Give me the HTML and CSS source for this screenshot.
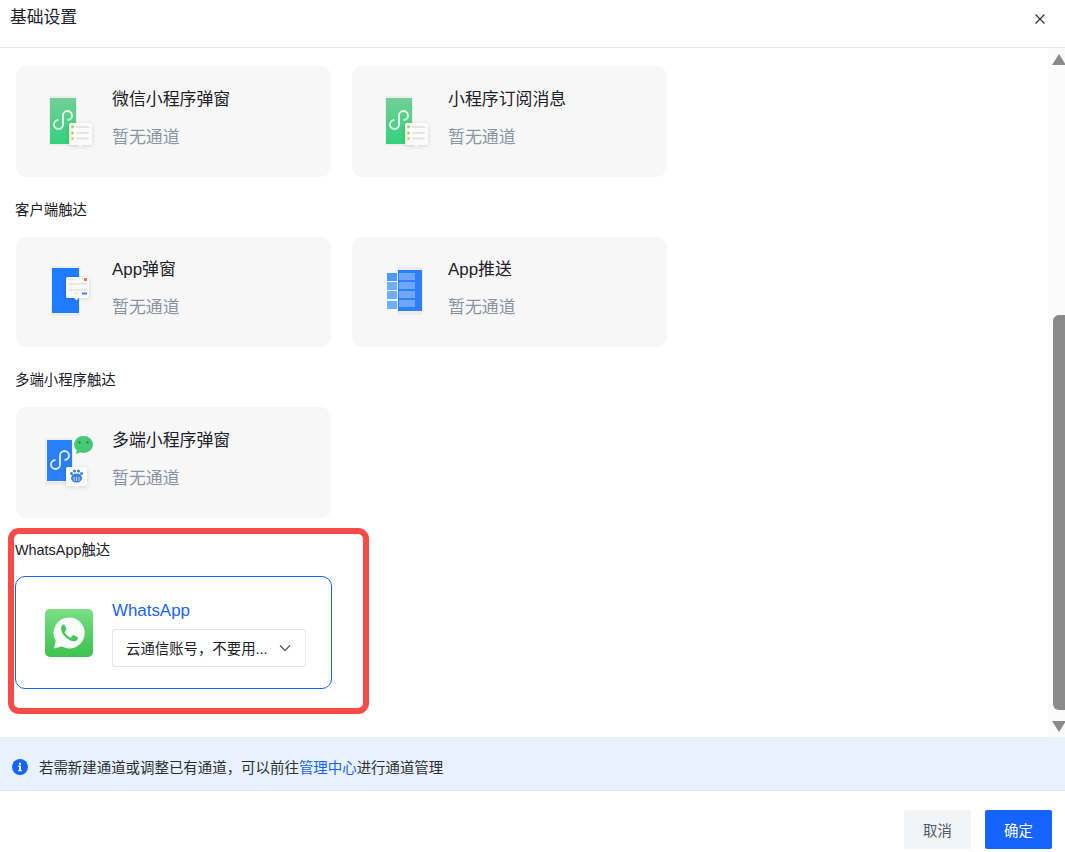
FILE: index.html
```html
<!DOCTYPE html>
<html lang="zh-CN">
<head>
<meta charset="utf-8">
<title>基础设置</title>
<link rel="stylesheet" href="styles.css">
</head>
<body>
<div class="dialog">
  <header class="head">
    <h1 class="head-title">基础设置</h1>
    <svg class="close" width="12" height="12" viewBox="0 0 12 12"><path d="M1.5 1.5l9 9M10.5 1.5l-9 9" stroke="#2b3040" stroke-width="1.2" fill="none"/></svg>
  </header>
  <main class="body">
    <div class="content">
      <div class="row">
        <div class="card">
          <svg class="icon" width="54" height="55" viewBox="-4 0 54 55"><defs><linearGradient id="g1" x1="0" y1="0" x2="0" y2="1"><stop offset="0" stop-color="#72ce96"/><stop offset="1" stop-color="#33d37b"/></linearGradient></defs><rect x="0" y="2" width="28" height="50" rx="1" fill="#ededed"/><rect x="1" y="4" width="26" height="46" fill="url(#g1)"/><path d="M18.500 26a4.500 4.500 0 1 0-4.500-4.500v9a4.500 4.500 0 1 1-4.500-4.500" fill="none" stroke="#fff" stroke-opacity=".88" stroke-width="1.800"/><rect class="pop" x="20" y="29" width="23" height="22" rx="2" fill="#fbfbfb"/><path d="M29 51h5l-2.500 2.500z" fill="#f4f4f4"/><circle cx="23.500" cy="33" r="1.400" fill="#9ad84a"/><circle cx="23.500" cy="39" r="1.400" fill="#9ad84a"/><circle cx="23.500" cy="44.500" r="1.400" fill="#f7c63e"/><path d="M27 33h13M27 39h13M27 44.500h13" stroke="#e6e6e6" stroke-width="2"/></svg>
          <div class="info"><div class="name">微信小程序弹窗</div><div class="status">暂无通道</div></div>
        </div>
        <div class="card">
          <svg class="icon" width="54" height="55" viewBox="-4 0 54 55"><defs><linearGradient id="g2" x1="0" y1="0" x2="0" y2="1"><stop offset="0" stop-color="#72ce96"/><stop offset="1" stop-color="#33d37b"/></linearGradient></defs><rect x="0" y="2" width="28" height="50" rx="1" fill="#ededed"/><rect x="1" y="4" width="26" height="46" fill="url(#g2)"/><path d="M18.500 26a4.500 4.500 0 1 0-4.500-4.500v9a4.500 4.500 0 1 1-4.500-4.500" fill="none" stroke="#fff" stroke-opacity=".88" stroke-width="1.800"/><rect class="pop" x="20" y="29" width="23" height="22" rx="2" fill="#fbfbfb"/><path d="M29 51h5l-2.500 2.500z" fill="#f4f4f4"/><circle cx="23.500" cy="33" r="1.400" fill="#9ad84a"/><circle cx="23.500" cy="39" r="1.400" fill="#9ad84a"/><circle cx="23.500" cy="44.500" r="1.400" fill="#f7c63e"/><path d="M27 33h13M27 39h13M27 44.500h13" stroke="#e6e6e6" stroke-width="2"/></svg>
          <div class="info"><div class="name">小程序订阅消息</div><div class="status">暂无通道</div></div>
        </div>
      </div>
      <div class="label">客户端触达</div>
      <div class="row short">
        <div class="card">
          <svg class="icon" width="54" height="55" viewBox="-4 0 54 55"><rect x="2" y="1" width="29" height="50" rx="1" fill="#ededed"/><rect x="3" y="3" width="27" height="45" fill="#1f7bff"/><rect class="pop" x="17" y="12" width="23" height="21" rx="1.500" fill="#fbfbfb"/><path d="M25 33h5l-2.500 2.500z" fill="#f5f5f5"/><rect x="35" y="13" width="3" height="3" fill="#f0763c"/><path d="M19.500 14.500h7M19.500 19h18M19.500 25h18" stroke="#e4e4e4" stroke-width="1.600"/><rect x="33" y="27.500" width="5" height="2" fill="#3b86f0"/><rect x="25" y="27.500" width="5" height="2" fill="#e8e8e8"/></svg>
          <div class="info"><div class="name">App弹窗</div><div class="status">暂无通道</div></div>
        </div>
        <div class="card">
          <svg class="icon" width="54" height="55" viewBox="-4 0 54 55"><rect x="12" y="2" width="26" height="48" rx="1" fill="#ededed"/><rect x="13" y="5" width="24" height="41" fill="#2a80fd"/><rect x="2" y="8" width="10" height="8" fill="#4f97fb"/><rect x="2" y="17" width="10" height="8" fill="#6cb0fb"/><rect x="2" y="26" width="10" height="8" fill="#6cb0fb"/><rect x="2" y="36" width="10" height="8" fill="#6cb0fb"/><rect x="14" y="8" width="16" height="7" fill="#6ea7f5"/><rect x="14" y="17" width="16" height="7" fill="#6ea7f5"/><rect x="14" y="26" width="16" height="7" fill="#6ea7f5"/><rect x="14" y="35" width="16" height="7" fill="#6ea7f5"/></svg>
          <div class="info"><div class="name">App推送</div><div class="status">暂无通道</div></div>
        </div>
      </div>
      <div class="label">多端小程序触达</div>
      <div class="row">
        <div class="card">
          <svg class="icon" width="54" height="55" viewBox="-4 0 54 55"><rect x="-4" y="3" width="28" height="47" rx="1" fill="#ededed"/><rect x="-2" y="5" width="25" height="41" fill="#2a7ffb"/><path d="M15.500 25a4.500 4.500 0 1 0-4.500-4.500v9a4.500 4.500 0 1 1-4.500-4.500" fill="none" stroke="#fff" stroke-opacity=".88" stroke-width="1.800"/><ellipse cx="34.500" cy="9.500" rx="9.500" ry="8.500" fill="#46c877"/><path d="M28 15l-1 4 5-2z" fill="#46c877"/><circle cx="30.500" cy="7.500" r="1.100" fill="#1c7a44"/><circle cx="38.500" cy="7.500" r="1.100" fill="#1c7a44"/><rect class="pop" x="17" y="32" width="21" height="19" rx="1.500" fill="#fbfbfb"/><path d="M25 51h5l-2.500 2.500z" fill="#f5f5f5"/><ellipse cx="27.500" cy="43" rx="5.500" ry="4.500" fill="#3b7fe0"/><circle cx="22.500" cy="38.500" r="1.500" fill="#3b7fe0"/><circle cx="25.500" cy="36" r="1.500" fill="#3b7fe0"/><circle cx="29.500" cy="36" r="1.500" fill="#3b7fe0"/><circle cx="32.500" cy="38.500" r="1.500" fill="#3b7fe0"/><path d="M25 42v4M27.500 42v4M30 42v4" stroke="#fff" stroke-width=".7"/></svg>
          <div class="info"><div class="name">多端小程序弹窗</div><div class="status">暂无通道</div></div>
        </div>
      </div>
      <div class="label wa-label">WhatsApp触达</div>
      <div class="row">
        <div class="card selected">
          <svg class="wa-icon" width="48" height="48" viewBox="0 0 48 48"><defs><linearGradient id="g3" x1="0" y1="0" x2="0" y2="1"><stop offset="0" stop-color="#7be085"/><stop offset=".55" stop-color="#55cd64"/><stop offset="1" stop-color="#3fc24f"/></linearGradient></defs><rect width="48" height="48" rx="5" fill="url(#g3)"/><path d="M24 8.500a15.500 15.500 0 0 0-13.300 23.400L9 39.500l7.800-1.900A15.500 15.500 0 1 0 24 8.500z" fill="#fff" fill-opacity=".95"/><path d="M18.500 15.500c-.7 0-2.500 1.400-2.500 4 0 5.500 7 12.500 13 12.800 2.400 0 4-2 4-3 0-.6-.1-1-.6-1.300l-3.600-1.800c-.5-.2-.9-.1-1.200.3l-1.400 1.800c-.3.300-.6.400-1 .2-2-.9-4.500-3.100-5.500-5.100-.2-.4-.1-.7.200-1l1.200-1.500c.3-.3.300-.7.200-1.100l-1.500-3.500c-.2-.5-.6-.8-1.300-.8z" fill="#48c75a"/></svg>
          <div class="info">
            <div class="name active">WhatsApp</div>
            <div class="select"><span class="select-text">云通信账号，不要用...</span><svg width="12" height="8" viewBox="0 0 12 8"><path d="M1 1.500l5 5 5-5" fill="none" stroke="#4a5060" stroke-width="1.200"/></svg></div>
          </div>
        </div>
      </div>
    </div>
    <div class="scrollbar">
      <span class="arrow up"></span>
      <div class="track"><div class="thumb"></div></div>
      <span class="arrow down"></span>
    </div>
  </main>
  <div class="notice">
    <svg width="16" height="16" viewBox="0 0 16 16"><circle cx="8" cy="8" r="8" fill="#1664ff"/><rect x="7" y="6.800" width="2" height="5.200" fill="#fff"/><rect x="7" y="3.800" width="2" height="2" fill="#fff"/><path d="M6 6.800h3v1H6zM6 11.200h4v1H6z" fill="#fff"/></svg>
    <span class="notice-text">若需新建通道或调整已有通道，可以前往<a class="link">管理中心</a>进行通道管理</span>
  </div>
  <footer class="foot">
    <button class="btn ghost">取消</button>
    <button class="btn primary">确定</button>
  </footer>
  <div class="annotation"></div>
</div>
</body>
</html>
```
FILE: styles.css
```css
* { box-sizing: border-box; }
html, body { margin: 0; height: 100%; }
body {
  background: #fff;
  font-family: "Liberation Sans", "Noto Sans CJK SC", sans-serif;
  color: #1d2129;
  overflow: hidden;
}
.dialog {
  position: relative;
  width: 1065px;
  height: 852px;
  display: flex;
  flex-direction: column;
}
.head {
  height: 48px;
  flex: none;
  border-bottom: 1px solid #e5e6eb;
  display: flex;
  justify-content: space-between;
  padding: 0 19px 0 10px;
}
.head-title { margin: 0; font-size: 16.800px; font-weight: 400; line-height: 36px; }
.close { margin-top: 13px; }
.body { height: 689px; flex: none; display: flex; overflow: hidden; }
.content { width: 1048px; padding: 18px 0 0 16px; }
.row { display: flex; gap: 21px; }
.card {
  width: 315px;
  height: 111px;
  background: #f7f7f8;
  border-radius: 10px;
  display: flex;
  align-items: center;
  padding-left: 29px;
}
.short .card { height: 110px; }
.icon { flex: none; margin-right: 13px; overflow: visible; }
.pop { filter: drop-shadow(0 1px 2px rgba(0, 0, 0, .14)); }
.info { display: flex; flex-direction: column; padding-bottom: 5px; }
.short .info { padding-bottom: 7px; }
.name { font-size: 16.900px; line-height: 24px; }
.status { font-size: 16.900px; line-height: 24px; margin-top: 14px; color: #8a94a6; }
.label { font-size: 14.400px; line-height: 20px; margin: 23px 0 17px -1px; color: #1d2129; }
.wa-label { margin-top: 22px; margin-bottom: 16px; }
.selected {
  width: 317px;
  height: 113px;
  margin-left: -1px;
  background: #fff;
  border: 1px solid #1664ff;
}
.selected .info { padding-bottom: 0; }
.wa-icon { flex: none; margin-right: 19px; }
.active { color: #1664ff; }
.select {
  width: 194px;
  height: 38px;
  margin-top: 6px;
  border: 1px solid #e5e6eb;
  border-radius: 2px;
  padding: 0 14px 0 13px;
  display: flex;
  align-items: center;
  justify-content: space-between;
  font-size: 14.400px;
}
.select-text { white-space: nowrap; }
.scrollbar {
  width: 17px;
  background: #fbfbfb;
  display: flex;
  flex-direction: column;
  align-items: flex-end;
  padding-top: 6px;
}
.arrow { width: 0; height: 0; border-left: 7px solid transparent; border-right: 7px solid transparent; margin-right: -1px; }
.up { border-bottom: 11px solid #8a8a8a; }
.down { border-top: 11px solid #8a8a8a; }
.track { flex: none; height: 656px; padding-top: 250px; }
.thumb { width: 12px; height: 395px; background: #8a8a8a; border-radius: 6px 0 0 6px; }
.notice {
  height: 54px;
  flex: none;
  background: #e8f1fd;
  border-bottom: 1px solid #e5e6eb;
  display: flex;
  align-items: center;
  gap: 11px;
  padding: 6px 0 0 12px;
}
.notice-text { font-size: 14.450px; white-space: nowrap; color: #2b2f38; }
.link { color: #1664ff; }
.foot { flex: 1; display: flex; justify-content: flex-end; gap: 14px; padding: 19px 13px 0 0; }
.btn {
  width: 67px;
  height: 39px;
  border: 0;
  border-radius: 2px;
  font: inherit;
  font-size: 14.400px;
}
.ghost { background: #f2f3f5; color: #4e5969; }
.primary { background: #1664ff; color: #fff; }
.annotation {
  position: absolute;
  left: 8px;
  top: 528px;
  width: 361px;
  height: 186px;
  border: 6px solid #f54c48;
  border-radius: 11px;
  pointer-events: none;
}
```
